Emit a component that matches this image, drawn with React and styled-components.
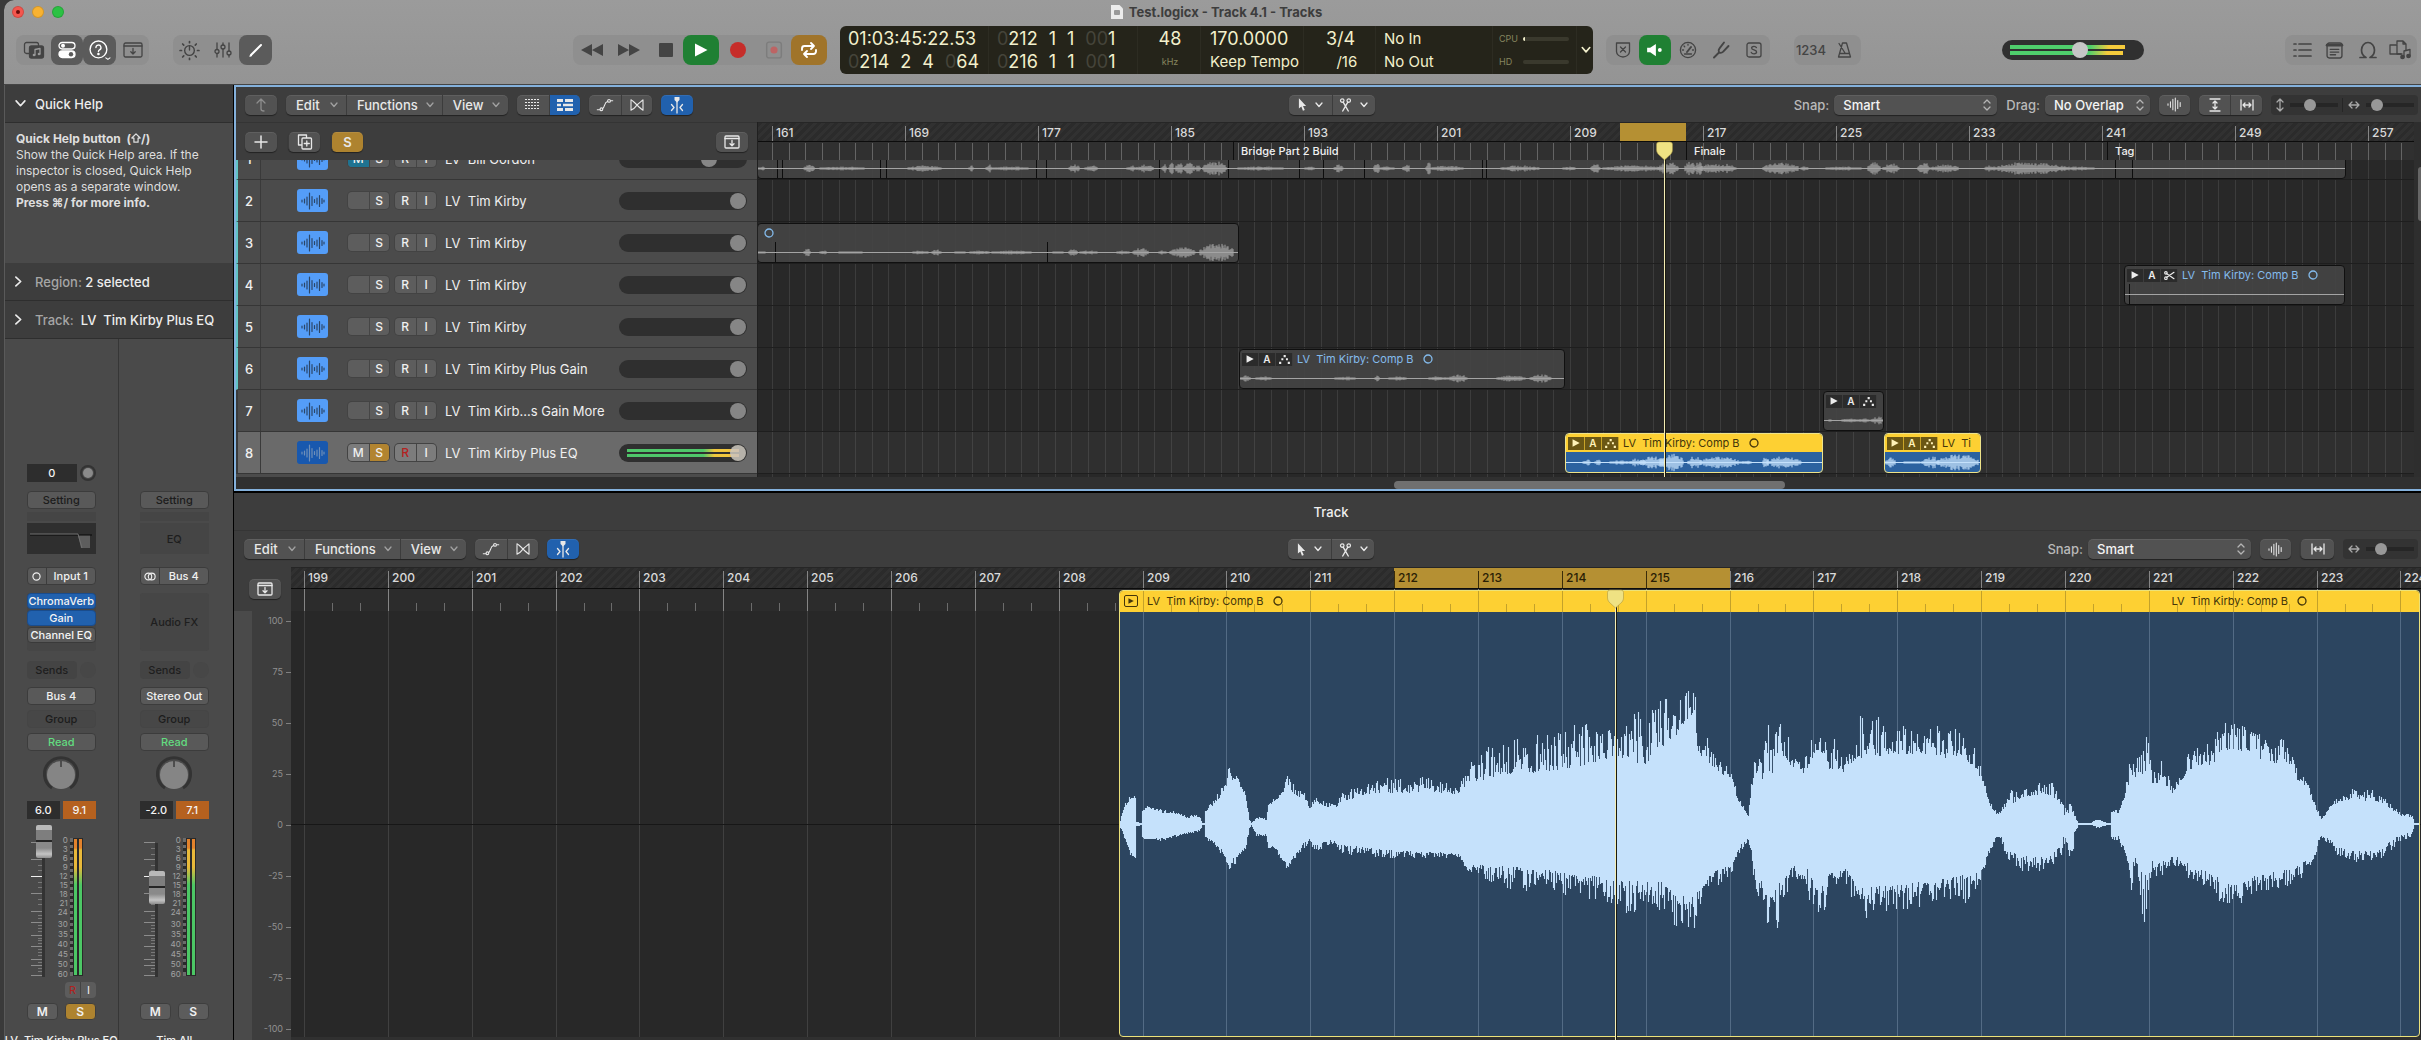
import React from 'react';
import styled, { createGlobalStyle, css } from 'styled-components';

const GlobalStyle = createGlobalStyle`
  * {
    box-sizing: border-box;
  }

  body {
    margin: 0;
    background: #3a3a3a;
    font-family: Inter, "Liberation Sans", sans-serif;
    font-size: 13px;
    color: #f0f0f0;
    overflow: hidden;
  }

  button, select, input {
    font: inherit;
    color: inherit;
    margin: 0;
  }

  button {
    padding: 0;
    border: none;
    background: none;
    cursor: default;
  }
`;

// Timeline scale
const ARRANGE = { origin: 14, firstBar: 161, bar: 133 / 8 };
const EDITOR = { origin: 13, firstBar: 199, bar: 587 / 7 };
const PLAYHEAD = 214.63;
const barX = (scale, bar) => Math.round(scale.origin + (bar - scale.firstBar) * scale.bar);

/* ---------- icons ---------- */

const icons = {
  library: { box: '0 0 22 18', art: <><rect x="1.5" y="1.5" width="14" height="11" rx="2" /><rect x="6.5" y="5" width="14" height="12" rx="2" fill="currentColor" /><path d="M12 14V8.5l5-1V13" stroke="#999" strokeWidth="1.3" /><circle cx="11" cy="14" r="1.3" fill="#999" stroke="none" /><circle cx="16" cy="13" r="1.3" fill="#999" stroke="none" /></> },
  inspector: { box: '0 0 18 18', art: <><rect x="1" y="1.5" width="16" height="6.5" rx="3.2" /><circle cx="5" cy="4.8" r="2" fill="currentColor" stroke="none" /><rect x="1" y="10" width="16" height="6.5" rx="3.2" fill="currentColor" /><circle cx="13" cy="13.2" r="2.2" fill="#5b5b5b" stroke="none" /></> },
  help: { box: '0 0 20 20', art: <><circle cx="9" cy="9" r="8" /><path d="M6.6 7.2a2.4 2.4 0 1 1 3.4 2.2c-.8.4-1 .8-1 1.6" /><circle cx="9" cy="13.3" r=".6" fill="currentColor" /><path d="M16 17l2 1.5 2-1.5" strokeWidth="1" /></> },
  drawer: { box: '0 0 20 16', art: <><rect x="1" y="1" width="18" height="14" rx="1.5" /><path d="M1 4h18M10 6.5v5.5M7.8 9.8l2.2 2.2 2.2-2.2" /></> },
  drawerDown: { box: '0 0 16 14', art: <><rect x="1" y="1" width="14" height="12" rx="1" /><path d="M1 3.5h14M8 5.5v5M6 8.7l2 2 2-2" /></> },
  dial: { box: '0 0 20 18', art: <><circle cx="10" cy="9" r="4.6" /><path d="M10 4.5v4" /><path d="M10 .5v1M10 16.5v1M1 9h1.4M17.6 9H19M3.5 2.8l1 1M16.5 2.8l-1 1M3.5 15.2l1-1M16.5 15.2l-1-1" strokeWidth="1.6" /></> },
  mixer: { box: '0 0 18 16', art: <><path d="M3 1v6.5M3 11.5V15M9 1v2M9 7v8M15 1v8M15 13v2" /><circle cx="3" cy="9.5" r="2" /><circle cx="9" cy="5" r="2" /><circle cx="15" cy="11" r="2" /></> },
  pencil: { box: '0 0 14 14', art: <><path d="M2 12L12 2" strokeWidth="2" /><path d="M1 13.2l1.4-.6" /></> },
  rewind: { box: '0 0 24 14', fill: true, art: <path d="M12 1v12L1 7zM23 1v12L12 7z" /> },
  forward: { box: '0 0 24 14', fill: true, art: <path d="M12 1v12l11-6zM1 1v12l11-6z" /> },
  stop: { box: '0 0 14 14', fill: true, art: <rect x="0" y="0" width="14" height="14" rx="1" /> },
  play: { box: '0 0 14 14', fill: true, art: <path d="M1 .5v13L13.5 7z" /> },
  record: { box: '0 0 16 16', fill: true, art: <circle cx="8" cy="8" r="8" /> },
  capture: { box: '0 0 16 16', art: <><rect x="1.5" y="1" width="13" height="14" rx="2" stroke="#7d7d7d" /><circle cx="8" cy="8" r="3.2" fill="#bd6464" stroke="none" /></> },
  cycle: { box: '0 0 18 16', art: <path d="M2 8V6.5A2.5 2.5 0 0 1 4.500 4H14M11 1l3 3-3 3M16 8v1.5a2.5 2.5 0 0 1-2.500 2.500H4M7 9l-3 3 3 3" strokeWidth="1.9" /> },
  shield: { box: '0 0 16 16', art: <><path d="M1.5 1h13v8.5c0 3-3 5.500-6.500 5.500S1.500 12.500 1.500 9.500z" /><path d="M5.5 5l5 5M10.5 5l-5 5" /></> },
  speaker: { box: '0 0 20 16', fill: true, art: <><path d="M1 5.5h3.5L11 1v14l-6.500-4.500H1z" /><circle cx="15.5" cy="8" r="2.2" /></> },
  gauge: { box: '0 0 18 18', art: <><circle cx="9" cy="9" r="7.6" /><path d="M8 11l4-5" strokeWidth="2" /><path d="M3.5 9h1M13.5 9h1M9 3.2v1M5 5l.7.7M5.5 13h7" /></> },
  fork: { box: '0 0 18 18', art: <path d="M2 16.500l5-5M7 11.500c-1-2-.5-3 .5-4.200L12 1.500M7 11.500c2 .8 3.200.2 4.200-.8L16.500 5" strokeWidth="1.9" /> },
  solo: { box: '0 0 16 16', art: <><rect x="1" y="1" width="14" height="14" rx="2" /><path d="M10.4 5.6C10 4.800 9.100 4.400 8 4.400c-1.400 0-2.400.6-2.400 1.700 0 2.500 5 1.200 5 3.900 0 1.100-1.100 1.800-2.600 1.800-1.300 0-2.300-.5-2.700-1.400" /></> },
  metronome: { box: '0 0 18 18', art: <><path d="M6.5 2h4l4 14h-12zM3.5 12.500h10M9 12L3 2.500" /></> },
  list: { box: '0 0 18 16', art: <path d="M6 2h12M6 8h12M6 14h12M1 2h2M1 8h2M1 14h2" strokeWidth="1.7" /> },
  notes: { box: '0 0 16 16', art: <><rect x="1" y="1" width="14" height="14" rx="2" /><path d="M1 3h14" strokeWidth="2.5" /><path d="M4 7h8M4 9.500h8M4 12h5" strokeWidth="1.2" /></> },
  loop: { box: '0 0 18 18', art: <path d="M1 16.500h6c-2.600-1.400-4.500-4-4.500-7.500a6.500 7.500 0 0 1 13 0c0 3.500-1.900 6.100-4.500 7.500h6" strokeWidth="1.7" /> },
  media: { box: '0 0 24 20', art: <><path d="M8 4V1h6l3 3v6M14 1v3h3M8 14h4" /><path d="M1 5h7v9H1zM8 5v9h5" /><path d="M15 17v-6l6-1.500V16" /><circle cx="13.5" cy="17" r="1.7" fill="currentColor" /><circle cx="19.5" cy="16" r="1.7" fill="currentColor" /></> },
  up: { box: '0 0 14 14', art: <path d="M7 1v10c0 1.500 1 2 3 2M3 5l4-4 4 4" /> },
  grid: { box: '0 0 15 12', fill: true, art: [0, 1, 2, 3].map((r) => [0, 1, 2, 3, 4].map((c) => <rect key={`${r}${c}`} x={c * 3} y={r * 3} width="2" height="1" />)) },
  lanes: { box: '0 0 16 12', fill: true, art: <path d="M0 0h6v3H0zM8 0h8v3H8zM0 4.800h4v2.400H0zM6 4.800h10v2.400H6zM0 9h6v3H0zM8 9h8v3H8z" /> },
  automation: { box: '0 0 18 14', art: <><path d="M0 12.500h3M6.500 11C9 9 8 4 12 3M15.500 2H18" /><circle cx="4.8" cy="12" r="1.6" /><circle cx="13.7" cy="2.2" r="1.6" /></> },
  flex: { box: '0 0 18 14', art: <path d="M2 1v12c4-1 5-4 7-6S15 2 16 1v12c-2-1-5-4-7-6S4 2 2 1z" /> },
  catch: { box: '0 0 16 16', art: <><path d="M5.500 0h5v3L8 5.500 5.500 3z" fill="currentColor" stroke="none" /><path d="M8 4v12M2.500 7.500L5 10.500l-2.500 3M13.500 7.500L11 10.500l2.500 3" /></> },
  plus: { box: '0 0 12 12', art: <path d="M6 0v12M0 6h12" strokeWidth="1.5" /> },
  duplicate: { box: '0 0 16 16', art: <><path d="M4.500 11H1.500V1h8v2.500" /><rect x="5" y="4" width="9.500" height="11" rx="1" /><path d="M9.800 7v5M7.300 9.500h5" /></> },
  pointer: { box: '0 0 10 14', fill: true, art: <path d="M1 0v11.500l2.700-2.300L5.500 14l2-.9-1.900-4.500H9z" /> },
  scissors: { box: '0 0 14 14', art: <><circle cx="3.500" cy="2.800" r="1.900" /><circle cx="10.500" cy="2.800" r="1.900" /><path d="M4.500 4.500L10 14M9.500 4.500L4 14" strokeWidth="1.5" /></> },
  cut: { box: '0 0 12 10', art: <><circle cx="2" cy="2" r="1.4" /><circle cx="2" cy="8" r="1.4" /><path d="M3 3l8 5.500M3 7l8-5.500" /></> },
  wave: { box: '0 0 18 16', art: <path d="M1 7v2M4 4.500v7M7 1.500v13M10 0v16M13 3v10M16 5.500v5" strokeWidth="1.3" /> },
  trackWave: { box: '0 0 24 18', art: <path d="M1 8v2M3.500 7v4M6 5v8M8.500 1v16M11 4.500v9M13.500 7.500v3M16 6v6M18.500 3.500v11M21 6.500v5M23 8v2" strokeWidth="1.2" /> },
  fitHeight: { box: '0 0 12 14', art: <path d="M1 1h10M1 13h10M6 3v8M4 5l2-2 2 2M4 9l2 2 2-2" /> },
  fitWidth: { box: '0 0 14 12', art: <path d="M1 1v10M13 1v10M3 6h8M5 4L3 6l2 2M9 4l2 2-2 2" /> },
  vertical: { box: '0 0 8 14', art: <path d="M4 1v12M1 4l3-3 3 3M1 10l3 3 3-3" /> },
  horizontal: { box: '0 0 12 8', art: <path d="M1 4h10M4 1L1 4l3 3M8 1l3 3-3 3" /> },
  stepper: { box: '0 0 8 12', art: <path d="M1 4l3-3 3 3M1 8l3 3 3-3" /> },
  chevron: { box: '0 0 8 6', art: <path d="M1 1l3 3.500L7 1" /> },
  chevronRight: { box: '0 0 8 12', art: <path d="M1 1l5.500 5L1 11" strokeWidth="1.9" /> },
  chevronDown: { box: '0 0 12 8', art: <path d="M1 1l5 5.500L11 1" strokeWidth="1.9" /> },
  dots: { box: '0 0 12 10', fill: true, art: <path d="M5 0h2.400v2.400H5zM2.500 3.500h2.200v2.200H2.500zM7.600 3.500h2.200v2.200H7.600zM0 7.500h2.400v2.400H0zM9.600 7.500H12v2.400H9.600z" /> },
  mono: { box: '0 0 10 10', art: <circle cx="5" cy="5" r="4" /> },
  stereo: { box: '0 0 14 10', art: <><circle cx="5" cy="5" r="4" /><circle cx="9" cy="5" r="4" /></> },
  doc: { box: '0 0 12 14', art: <><path d="M0 0h8.500L12 3.500V14H0z" fill="#ececec" stroke="none" /><rect x="3" y="5" width="6" height="5" rx="1" fill="#9a9a9a" stroke="none" /></> },
  shift: { box: '0 0 12 12', art: <path d="M6 1l5 5H8.500v5h-5V6H1z" strokeWidth="1.5" /> },
};

const Svg = styled.svg`
  display: block;
  flex: none;
  overflow: visible;
`;

const Icon = ({ name, size }) => {
  const { box, art, fill } = icons[name];
  const [, , w, h] = box.split(' ').map(Number);
  const width = size || w;
  return (
    <Svg
      width={width}
      height={Math.round((width * h) / w)}
      viewBox={box}
      fill={fill ? 'currentColor' : 'none'}
      stroke={fill ? 'none' : 'currentColor'}
      strokeWidth="1.3"
      strokeLinecap="round"
      strokeLinejoin="round"
      aria-hidden="true"
    >
      {art}
    </Svg>
  );
};

/* ---------- wave forms ---------- */

const random = (seed) => {
  let s = seed;
  return () => {
    s = (s * 16807) % 2147483647;
    return s / 2147483647;
  };
};

// x, quiet and loud level above the centre line, quiet and loud level below it
const VOICE = [
  [0, 3, 4, 3, 4], [3, 14, 16, 9, 11], [10, 25, 34, 28, 31], [15, 25, 28, 32, 36], [16, 2, 2, 2, 2], [21, 1, 2, 1, 2],
  [22, 12, 14, 13, 15], [27, 16, 19, 15, 16], [41, 11, 15, 14, 17], [56, 10, 13, 11, 13], [69, 5, 8, 8, 10], [75, 8, 11, 7, 9],
  [80, 5, 7, 5, 7], [82, 1, 1, 1, 1], [84, 1, 1, 1, 1], [85, 12, 14, 12, 14], [92, 18, 24, 16, 21], [99, 26, 34, 22, 28],
  [106, 38, 46, 34, 38], [109, 55, 62, 44, 49], [112, 44, 48, 34, 39], [117, 44, 54, 32, 43], [121, 34, 39, 24, 29], [125, 28, 31, 22, 27],
  [129, 4, 6, 4, 6], [131, 1, 2, 1, 2], [136, 4, 8, 10, 13], [146, 4, 6, 10, 12], [148, 17, 19, 22, 25], [154, 23, 26, 22, 26],
  [162, 28, 33, 32, 38], [167, 40, 48, 42, 48], [173, 30, 40, 32, 36], [184, 24, 31, 18, 24], [189, 14, 18, 14, 18], [195, 22, 28, 20, 29],
  [208, 15, 22, 17, 22], [211, 20, 27, 16, 20], [216, 17, 22, 17, 22], [222, 23, 33, 20, 31], [257, 31, 44, 25, 34], [279, 31, 48, 27, 35],
  [307, 32, 48, 28, 35], [338, 29, 38, 29, 34], [347, 40, 56, 41, 47], [357, 40, 74, 41, 52], [381, 50, 82, 42, 64], [405, 50, 88, 44, 68],
  [433, 53, 90, 46, 70], [459, 57, 103, 52, 74], [474, 62, 106, 52, 77], [496, 68, 94, 58, 82], [510, 64, 114, 56, 93], [526, 56, 114, 58, 86],
  [541, 76, 125, 58, 94], [557, 88, 128, 72, 105], [574, 92, 140, 72, 115], [579, 66, 90, 65, 84], [589, 60, 86, 50, 64], [600, 50, 63, 44, 60],
  [611, 46, 54, 42, 52], [617, 24, 30, 24, 34], [628, 7, 10, 12, 16], [631, 34, 42, 26, 34], [635, 52, 70, 44, 70], [642, 40, 66, 56, 80],
  [648, 50, 100, 76, 114], [653, 42, 80, 66, 84], [658, 66, 105, 60, 110], [666, 66, 98, 52, 78], [672, 52, 72, 42, 62], [683, 50, 63, 43, 56],
  [689, 58, 96, 46, 80], [696, 74, 92, 66, 88], [705, 68, 92, 56, 87], [710, 52, 66, 48, 80], [716, 58, 95, 48, 66], [722, 44, 62, 42, 52],
  [729, 58, 88, 48, 68], [737, 66, 112, 62, 93], [750, 66, 117, 62, 95], [768, 70, 98, 62, 88], [783, 69, 98, 60, 87], [794, 70, 92, 58, 84],
  [811, 70, 101, 58, 82], [824, 66, 94, 54, 76], [837, 68, 96, 52, 80], [848, 62, 84, 50, 84], [857, 52, 74, 46, 64], [863, 41, 46, 38, 50],
  [870, 17, 22, 22, 28], [876, 9, 13, 12, 15], [881, 10, 14, 13, 19], [886, 19, 28, 26, 36], [893, 20, 40, 28, 43], [900, 25, 35, 32, 48],
  [915, 29, 40, 33, 49], [931, 28, 45, 32, 44], [939, 22, 27, 22, 34], [944, 7, 18, 11, 26], [951, 14, 22, 22, 42], [954, 7, 12, 8, 18],
  [958, 1, 1, 1, 1], [971, 1, 1, 1, 1], [977, 4, 6, 3, 5], [987, 1, 1, 1, 1], [990, 1, 1, 1, 1], [991, 12, 15, 13, 16],
  [998, 10, 14, 12, 16], [1004, 24, 30, 24, 30], [1010, 46, 72, 44, 74], [1015, 47, 56, 34, 48], [1023, 50, 106, 50, 104], [1028, 48, 100, 46, 78],
  [1032, 38, 48, 37, 50], [1041, 43, 67, 38, 54], [1052, 31, 37, 32, 42], [1063, 46, 64, 34, 46], [1072, 56, 76, 44, 62], [1091, 58, 84, 48, 63],
  [1102, 74, 105, 58, 84], [1116, 74, 105, 60, 84], [1135, 68, 92, 52, 68], [1146, 62, 88, 48, 66], [1165, 60, 86, 44, 68], [1172, 60, 84, 46, 58],
  [1177, 44, 54, 40, 62], [1187, 36, 44, 36, 44], [1194, 18, 24, 28, 38], [1200, 5, 8, 10, 15], [1202, 4, 6, 11, 14], [1211, 18, 24, 16, 27],
  [1222, 22, 29, 24, 38], [1230, 25, 35, 26, 39], [1248, 23, 36, 26, 37], [1261, 21, 31, 26, 37], [1271, 14, 22, 16, 28], [1280, 8, 13, 11, 18],
  [1292, 7, 9, 8, 13], [1294, 1, 1, 1, 1], [1300, 1, 1, 1, 1],
];

const voicePath = (points, centre) => {
  const next = random(4211);
  let d = '';
  for (let i = 0; i < points.length - 1; i += 1) {
    const [x0, ...a] = points[i];
    const [x1, ...b] = points[i + 1];
    for (let x = x0; x < x1; x += 1) {
      const t = (x - x0) / (x1 - x0);
      const [q, l, dq, dl] = a.map((v, k) => v + (b[k] - v) * t);
      const up = Math.round(q + (l - q) * next() ** 1.6);
      const down = Math.round(dq + (dl - dq) * next() ** 1.5);
      d += `M${x} ${centre - up}V${centre + down}`;
    }
  }
  return d;
};

// blobs: start, end, level
const blobPath = (blobs, width, centre) => {
  const next = random(977);
  let d = `M0 ${centre}H${width}`;
  blobs.forEach(([from, to, level]) => {
    for (let x = from; x < to; x += 1) {
      const t = (x - from) / (to - from);
      const fade = Math.min(1, 0.35 + 2.2 * Math.min(t, 1 - t));
      const h = Math.max(1, level * fade * (0.4 + 0.6 * next()));
      d += `M${x} ${(centre - h).toFixed(1)}V${(centre + h).toFixed(1)}`;
    }
  });
  return d;
};

/* ---------- shared controls ---------- */

const face = css`
  background: #525252;
  border-radius: 5px;
  box-shadow: 0 1px 1px rgba(0, 0, 0, 0.45), inset 0 1px 0 rgba(255, 255, 255, 0.08);
`;

const Cluster = styled.div`
  display: flex;
  height: 20px;
  overflow: hidden;
  ${face}
`;

const Tool = styled.button`
  display: flex;
  align-items: center;
  justify-content: center;
  gap: 8px;
  min-width: ${(p) => p.$w || 32}px;
  height: 20px;
  color: ${(p) => (p.$dim ? '#8d8d8d' : '#e8e8e8')};
  background: ${(p) => p.$bg || 'transparent'};
  font-weight: ${(p) => (p.$bold ? 600 : 400)};

  & + & {
    border-left: 1px solid #3c3c3c;
  }
`;

const Single = styled(Tool)`
  ${face}
  background: ${(p) => p.$bg || '#525252'};
`;

const MenuButton = styled(Tool)`
  justify-content: space-between;
  padding: 0 8px 0 10px;
  font-weight: 500;

  svg {
    color: #a0a0a0;
  }
`;

const SelectLabel = styled.label`
  display: flex;
  align-items: center;
  gap: 5px;
  color: #b9b9b9;
  font-weight: 500;
`;

const SelectBox = styled.span`
  display: flex;
  align-items: center;
  width: ${(p) => p.$w}px;
  padding-right: 6px;
  color: #b5b5b5;
  ${face}

  select {
    flex: 1;
    height: 20px;
    padding: 0 0 0 9px;
    appearance: none;
    border: none;
    background: none;
    color: #f4f4f4;
    font-weight: 500;
  }
`;

const Zoomers = styled.div`
  display: flex;
  align-items: center;
  height: 20px;
  background: #333;
  border-radius: 4px;
`;

const Zoomer = styled.label`
  display: flex;
  align-items: center;
  gap: 6px;
  padding: 0 4px 0 5px;
  color: #a8a8a8;

  & + & {
    border-left: 1px solid #262626;
  }

  input {
    width: 48px;
    height: 14px;
    appearance: none;
    background: linear-gradient(#262626, #262626) center / 100% 4px no-repeat;
  }

  input::-webkit-slider-thumb {
    appearance: none;
    width: 12px;
    height: 12px;
    border-radius: 50%;
    background: #989898;
  }
`;

const MenuCluster = () => (
  <Cluster>
    {[['Edit', 60], ['Functions', 95], ['View', 66]].map(([name, w]) => (
      <MenuButton key={name} $w={w}>{name}<Icon name="chevron" /></MenuButton>
    ))}
  </Cluster>
);

const CurveCluster = () => (
  <Cluster>
    <Tool aria-label="Automation"><Icon name="automation" size={16} /></Tool>
    <Tool $w={31} aria-label="Flex"><Icon name="flex" size={16} /></Tool>
  </Cluster>
);

const PointerCluster = () => (
  <Cluster>
    <Tool $w={43} aria-label="Pointer tool"><Icon name="pointer" size={9} /><Icon name="chevron" /></Tool>
    <Tool $w={43} aria-label="Scissors tool"><Icon name="scissors" size={13} /><Icon name="chevron" /></Tool>
  </Cluster>
);

const Snap = ({ label, value, w }) => (
  <SelectLabel>
    {label}
    <SelectBox $w={w}>
      <select defaultValue={value}><option>{value}</option></select>
      <Icon name="stepper" />
    </SelectBox>
  </SelectLabel>
);

/* ---------- window header ---------- */

const Window = styled.div`
  display: flex;
  flex-direction: column;
  height: 100vh;
  margin-left: 4px;
  border-radius: 10px 0 0 0;
  overflow: hidden;
  background: #000;
`;

const Header = styled.header`
  flex: none;
  background: linear-gradient(#9b9b9b, #949494);
  color: #3d3d3d;
  border-bottom: 1px solid #454545;
`;

const TitleBar = styled.div`
  display: grid;
  grid-template-columns: 1fr auto 1fr;
  align-items: center;
  height: 24px;
  padding-left: 8px;
`;

const Lights = styled.div`
  display: flex;
  gap: 8px;
`;

const Light = styled.button`
  width: 12px;
  height: 12px;
  border-radius: 50%;
  background: ${(p) => p.$c};
  border: 1px solid rgba(0, 0, 0, 0.15);
`;

const CloseDot = styled.span`
  display: block;
  width: 4px;
  height: 4px;
  margin: 0 auto;
  border-radius: 50%;
  background: #6b0d0a;
`;

const Title = styled.h1`
  display: flex;
  align-items: center;
  gap: 6px;
  margin: 0;
  font-size: 13px;
  font-weight: 700;
`;

const Controls = styled.div`
  display: grid;
  grid-template-columns: 1fr auto 1fr;
  gap: 13px;
  padding: 2px 4px 10px 12px;
`;

const Side = styled.div`
  display: flex;
  align-items: center;
  gap: 24px;
`;

const Spring = styled.span`
  flex: 1;
`;

const Pad = styled.div`
  display: flex;
  align-items: center;
  justify-content: space-between;
  height: 30px;
  border-radius: 8px;
  background: #8f8f8f;
`;

const PadButton = styled.button`
  display: flex;
  align-items: center;
  justify-content: center;
  width: ${(p) => p.$w || 33}px;
  height: 30px;
  border-radius: 8px;
  color: ${(p) => p.$c || '#444'};
  background: ${(p) => p.$bg || 'transparent'};
  font-size: 13px;
  font-weight: 500;
`;

const Lcd = styled.div`
  display: flex;
  width: 753px;
  height: 48px;
  border-radius: 6px;
  background: #25241a;
  color: #f3f0cc;
  font-size: 18px;
  line-height: 23px;
`;

const LcdCell = styled.div`
  display: grid;
  grid-template-rows: 23px 23px;
  width: ${(p) => p.$w}px;
  padding: 1px 0 0 ${(p) => p.$pl || 8}px;
  border-right: 1px solid #2d2c22;
  white-space: pre;
  justify-items: ${(p) => (p.$center ? 'center' : 'start')};
`;

const Position = styled.span`
  display: flex;
  gap: 11px;
`;

const Faint = styled.span`
  color: #45443a;
`;

const Words = styled.span`
  font-size: 15px;
`;

const Unit = styled.span`
  font-size: 9px;
  color: #86845f;
`;

const Load = styled.div`
  display: grid;
  grid-template-columns: 16px 46px;
  align-items: center;
  gap: 8px;
  font-size: 9px;
  color: #86845f;
`;

const LoadBar = styled.span`
  height: 4px;
  border-radius: 2px;
  background: linear-gradient(90deg, #f3f0cc ${(p) => p.$v}px, #3a392d ${(p) => p.$v}px);
`;

const LcdMenu = styled.button`
  display: flex;
  align-items: center;
  padding-left: 4px;
`;

const MasterVolume = styled.input`
  width: 142px;
  height: 20px;
  padding: 0 8px;
  appearance: none;
  border-radius: 10px;
  background:
    linear-gradient(90deg, #4fce6c 70%, #f5cb3c 86%) 8px 5px / 115px 4px no-repeat,
    linear-gradient(90deg, #4fce6c 70%, #f5cb3c 86%) 8px 11px / 113px 4px no-repeat,
    #303030;

  &::-webkit-slider-thumb {
    appearance: none;
    width: 16px;
    height: 16px;
    border-radius: 50%;
    background: #c6c6c6;
  }
`;

const Beats = ({ parts }) => (
  <Position>
    {parts.map(([dim, lit], i) => (
      <span key={i}><Faint>{dim}</Faint>{lit}</span>
    ))}
  </Position>
);

const WindowHeader = () => (
  <Header>
    <TitleBar>
      <Lights>
        <Light $c="#f4564e" aria-label="Close"><CloseDot /></Light>
        <Light $c="#f8b231" aria-label="Minimise" />
        <Light $c="#2bc143" aria-label="Zoom" />
      </Lights>
      <Title><Icon name="doc" />Test.logicx - Track 4.1 - Tracks</Title>
    </TitleBar>
    <Controls>
      <Side>
        <Pad>
          <PadButton $w={35} aria-label="Library"><Icon name="library" /></PadButton>
          <PadButton $w={32} $bg="#5b5b5b" $c="#fff" aria-label="Inspector"><Icon name="inspector" /></PadButton>
          <PadButton $bg="#5b5b5b" $c="#fff" aria-label="Quick Help"><Icon name="help" size={21} /></PadButton>
          <PadButton aria-label="Toolbar"><Icon name="drawer" /></PadButton>
        </Pad>
        <Pad>
          <PadButton aria-label="Smart Controls"><Icon name="dial" size={21} /></PadButton>
          <PadButton aria-label="Mixer"><Icon name="mixer" /></PadButton>
          <PadButton $bg="#5b5b5b" $c="#fff" aria-label="Editors"><Icon name="pencil" /></PadButton>
        </Pad>
        <Spring />
        <Pad>
          <PadButton $w={37} aria-label="Rewind"><Icon name="rewind" /></PadButton>
          <PadButton $w={38} aria-label="Forward"><Icon name="forward" /></PadButton>
          <PadButton $w={35} aria-label="Stop"><Icon name="stop" /></PadButton>
          <PadButton $w={36} $bg="#1f8033" $c="#fff" aria-label="Play"><Icon name="play" /></PadButton>
          <PadButton $w={38} $c="#c62d2a" aria-label="Record"><Icon name="record" /></PadButton>
          <PadButton $w={34} aria-label="Capture recording"><Icon name="capture" size={18} /></PadButton>
          <PadButton $w={36} $bg="#a0742a" $c="#fff" aria-label="Cycle"><Icon name="cycle" /></PadButton>
        </Pad>
      </Side>
      <Lcd>
        <LcdCell $w={149}>
          <span>01:03:45:22.53</span>
          <Beats parts={[['0', '214'], ['', '2'], ['', '4'], ['0', '64']]} />
        </LcdCell>
        <LcdCell $w={149}>
          <Beats parts={[['0', '212'], ['', '1'], ['', '1'], ['00', '1']]} />
          <Beats parts={[['0', '216'], ['', '1'], ['', '1'], ['00', '1']]} />
        </LcdCell>
        <LcdCell $w={63} $pl={2} $center>
          <span>48</span>
          <Unit>kHz</Unit>
        </LcdCell>
        <LcdCell $w={103} $pl={9}>
          <span>170.0000</span>
          <Words>Keep Tempo</Words>
        </LcdCell>
        <LcdCell $w={72} $pl={2} $center>
          <span>3/4</span>
          <Words>   /16</Words>
        </LcdCell>
        <LcdCell $w={117}>
          <Words>No In</Words>
          <Words>No Out</Words>
        </LcdCell>
        <LcdCell $w={84} $pl={6}>
          <Load>CPU<LoadBar $v={2} /></Load>
          <Load>HD<LoadBar $v={0} /></Load>
        </LcdCell>
        <LcdMenu aria-label="Display mode"><Icon name="chevron" size={10} /></LcdMenu>
      </Lcd>
      <Side>
        <Pad>
          <PadButton aria-label="Replace"><Icon name="shield" /></PadButton>
          <PadButton $w={32} $bg="#1f8033" $c="#fff" aria-label="Low latency"><Icon name="speaker" size={18} /></PadButton>
          <PadButton aria-label="Varispeed"><Icon name="gauge" /></PadButton>
          <PadButton aria-label="Tuner"><Icon name="fork" /></PadButton>
          <PadButton aria-label="Solo"><Icon name="solo" /></PadButton>
        </Pad>
        <Pad>
          <PadButton $w={34} aria-label="Count in">1234</PadButton>
          <PadButton aria-label="Metronome"><Icon name="metronome" /></PadButton>
        </Pad>
        <Spring />
        <MasterVolume type="range" defaultValue="56" aria-label="Master volume" />
        <Spring />
        <Pad>
          <PadButton aria-label="List editors"><Icon name="list" /></PadButton>
          <PadButton aria-label="Note pads"><Icon name="notes" size={17} /></PadButton>
          <PadButton aria-label="Loop browser"><Icon name="loop" /></PadButton>
          <PadButton aria-label="Browsers"><Icon name="media" /></PadButton>
        </Pad>
      </Side>
    </Controls>
  </Header>
);

/* ---------- inspector ---------- */

const Main = styled.main`
  display: flex;
  flex: 1;
  min-height: 0;
`;

const Inspector = styled.aside`
  display: flex;
  flex-direction: column;
  width: 229px;
  flex: none;
  background: #4a4a4a;
  border-left: 1px solid #5a5a5a;
`;

const Section = styled.button`
  display: flex;
  align-items: center;
  flex: none;
  height: 38px;
  padding-left: 10px;
  background: #3d3d3d;
  border-bottom: 1px solid #2e2e2e;
  color: #ededed;
  font-weight: 500;
  white-space: pre;
`;

const Marker = styled.span`
  display: flex;
  width: 20px;
`;

const Soft = styled.span`
  color: #a6a6a6;
`;

const HelpText = styled.div`
  flex: none;
  height: 140px;
  padding: 8px 11px;
  font-size: 12px;
  line-height: 16px;
  color: #dedede;

  p {
    margin: 0;
  }

  svg {
    display: inline;
  }
`;

const Strips = styled.div`
  display: grid;
  grid-template-columns: 1fr 1fr;
  flex: 1;
  min-height: 0;
  padding-right: 3px;
`;

const Strip = styled.section`
  display: flex;
  flex-direction: column;
  align-items: center;
  padding-top: 125px;
  font-size: 11px;
  overflow: hidden;

  & + & {
    border-left: 1px solid #363636;
  }
`;

const StripRow = styled.div`
  display: flex;
  justify-content: ${(p) => (p.$end ? 'flex-end' : 'space-between')};
  align-items: center;
  flex: none;
  width: 69px;
  height: 18px;
  margin-top: ${(p) => p.$mt || 0}px;
  visibility: ${(p) => (p.$hidden ? 'hidden' : 'visible')};
`;

const Slot = styled.button`
  flex: none;
  width: 69px;
  height: 18px;
  margin-top: ${(p) => p.$mt || 0}px;
  border-radius: 4px;
  border: 1px solid ${(p) => (p.$flat ? '#454545' : '#3c3c3c')};
  background: ${(p) => (p.$flat ? '#474747' : '#595959')};
  color: ${(p) => p.$c || '#f0f0f0'};
  font-weight: 500;
  white-space: nowrap;
`;

const Split = styled.button`
  display: grid;
  grid-template-columns: 18px 1fr;
  align-items: center;
  flex: none;
  width: 69px;
  height: 18px;
  margin-top: 13px;
  border: 1px solid #3c3c3c;
  border-radius: 4px;
  background: #595959;
  font-weight: 500;

  svg {
    margin: 0 auto;
  }

  span {
    border-left: 1px solid #3c3c3c;
    line-height: 16px;
  }
`;

const NameBar = styled.div`
  flex: none;
  width: 69px;
  height: 9px;
  margin-top: 3px;
  background: #454545;
`;

const EqBox = styled.div`
  display: flex;
  align-items: center;
  justify-content: center;
  flex: none;
  width: 69px;
  height: 31px;
  margin-top: 2px;
  background: ${(p) => (p.$on ? '#2f2f2f' : '#454545')};
  color: #1e1e1e;
  font-weight: 500;
`;

const FxStack = styled.div`
  display: flex;
  flex-direction: column;
  justify-content: ${(p) => (p.$empty ? 'center' : 'flex-start')};
  gap: 1px;
  flex: none;
  width: 69px;
  height: 58px;
  margin-top: 8px;
  background: #464646;
  border-radius: 3px;
  text-align: center;
  color: #1e1e1e;
  font-weight: 500;
`;

const Fx = styled.button`
  height: 16px;
  border-radius: 4px;
  border: 1px solid ${(p) => (p.$on ? '#1a4c8c' : '#3a3a3a')};
  background: ${(p) => (p.$on ? '#2161ae' : '#595959')};
  color: #f4f4f4;
  font-weight: 500;
  line-height: 14px;
  white-space: nowrap;
`;

const Send = styled.button`
  width: 50px;
  height: 18px;
  border-radius: 4px;
  background: #444;
  color: #1e1e1e;
  font-weight: 500;
`;

const SendDot = styled.span`
  width: 16px;
  height: 16px;
  border-radius: 50%;
  background: #474747;
`;

const Readout = styled.output`
  width: ${(p) => p.$w || 33}px;
  height: 18px;
  background: ${(p) => (p.$hot ? '#b5611f' : '#2d2d2d')};
  color: #f4f4f4;
  font-weight: 500;
  line-height: 18px;
  text-align: center;
`;

const PanKnob = styled.div`
  flex: none;
  height: 36px;
  margin-top: 6px;
`;

const FaderRow = styled.div`
  display: flex;
  flex: none;
  width: 69px;
  height: 154px;
  margin-top: 6px;
  padding-left: 4px;
`;

const Fader = styled.input`
  width: 16px;
  height: 152px;
  margin-left: 5px;
  writing-mode: vertical-lr;
  direction: rtl;
  appearance: none;
  background: linear-gradient(#333, #333) center bottom / 3px 134px no-repeat;

  &::-webkit-slider-thumb {
    appearance: none;
    width: 16px;
    height: 33px;
    border-radius: 2px;
    background: linear-gradient(#b9b9b9 0 5px, #7e7e7e 5px 15px, #262626 15px 17px, #8a8a8a 17px 23px, #c4c4c4 29px, #8f8f8f);
  }
`;

const Ticks = styled.div`
  width: 0;
`;

const Scale = styled.div`
  display: flex;
  flex-direction: column;
  width: 16px;
  padding-top: 11px;
  font-size: 8px;
  line-height: 9px;
  color: #a2a2a2;
  text-align: right;

  span:nth-child(n + 10) {
    line-height: 10px;
  }

  span:nth-child(10) {
    margin-top: 2px;
  }
`;

const Meter = styled.div`
  display: flex;
  gap: 2px;
  height: 138px;
  margin: 13px 0 0 2px;
  padding: 1px;
  border-left: 3px dotted #6b6b6b;
  background: #2a2a2a;

  span {
    width: 3px;
    background: linear-gradient(#e2822c 0 9px, #e9b93a 11px 28px, #4cc765 46px);
  }
`;

const SquareButton = styled.button`
  width: 31px;
  height: 17px;
  border-radius: 4px;
  border: 1px solid #3e3e3e;
  background: ${(p) => (p.$gold ? '#ae832f' : '#5c5c5c')};
  font-size: 12px;
  font-weight: 600;
`;

const RecordPair = styled.div`
  display: grid;
  grid-template-columns: 1fr 1fr;
  width: 31px;
  height: 16px;
  border-radius: 4px;
  background: #5c5c5c;
  overflow: hidden;

  button + button {
    border-left: 1px solid #434343;
  }

  button:first-child {
    color: #b3221f;
  }
`;

const StripName = styled.div`
  flex: none;
  margin-top: 12px;
  font-size: 11px;
  font-weight: 500;
  line-height: 16px;
  white-space: pre;
`;

const LONG = [17, 34, 51, 68, 86, 97, 110, 121, 134, 140, 150];
const SHORT = [23, 29, 40, 45, 57, 62, 74, 79, 90, 93, 100, 103, 106, 113, 115, 118, 124, 127, 130, 137, 143, 146];
const LEVELS = [0, 3, 6, 9, 12, 15, 18, 21, 24, 30, 35, 40, 45, 50, 60];

const ChannelStrip = ({ strip }) => (
  <Strip>
    <StripRow $hidden={!strip.gain}>
      <Readout $w={50}>{strip.gain}</Readout>
      <Svg width="16" height="16" viewBox="0 0 16 16"><circle cx="8" cy="8" r="7" fill="none" stroke="#333" strokeWidth="2" /><circle cx="8" cy="8" r="5" fill="#8a8a8a" /></Svg>
    </StripRow>
    <Slot $mt={9} $c="#1c1c1c">Setting</Slot>
    <NameBar />
    <EqBox $on={strip.eq}>
      {strip.eq ? (
        <Svg width="62" height="24" viewBox="0 0 62 24">
          <path d="M48 8l3 13h9V8z" fill="#5d5d5d" />
          <path d="M0 8h62" stroke="#090909" />
          <path d="M0 7h48l4 14" stroke="#707070" fill="none" />
        </Svg>
      ) : 'EQ'}
    </EqBox>
    <Split><Icon name={strip.format} size={strip.format === 'mono' ? 9 : 12} /><span>{strip.input}</span></Split>
    <FxStack $empty={!strip.fx.length}>
      {strip.fx.map(([name, on]) => <Fx key={name} $on={on}>{name}</Fx>)}
      {!strip.fx.length && 'Audio FX'}
    </FxStack>
    <StripRow $mt={10}><Send>Sends</Send><SendDot /></StripRow>
    <Slot $mt={8}>{strip.output}</Slot>
    <Slot $mt={5} $flat $c="#1c1c1c">Group</Slot>
    <Slot $mt={5} $c="#63dc80">Read</Slot>
    <PanKnob>
      <Svg width="36" height="36" viewBox="0 0 36 36">
        <path d="M9 31A16.5 16.5 0 1 1 27 31" fill="none" stroke="#333" strokeWidth="3" />
        <circle cx="18" cy="18" r="14" fill="#858585" />
        <path d="M18 4v6" stroke="#161616" />
      </Svg>
    </PanKnob>
    <StripRow $mt={8}>
      <Readout>{strip.level}</Readout>
      <Readout $hot>{strip.peak}</Readout>
    </StripRow>
    <FaderRow>
      <Ticks>
        <Svg width="12" height="154" viewBox="0 0 12 154">
          {LONG.map((y) => <path key={y} d={`M0 ${y}.5h11`} stroke={y === 51 ? '#f0f0f0' : '#8c8c8c'} />)}
          {SHORT.map((y) => <path key={y} d={`M7 ${y}.5h4`} stroke="#787878" />)}
        </Svg>
      </Ticks>
      <Fader type="range" defaultValue={strip.fader} aria-label={`${strip.name} volume`} />
      <Scale>{LEVELS.map((n) => <span key={n}>{n}</span>)}</Scale>
      <Meter><span /><span /></Meter>
    </FaderRow>
    <StripRow $mt={2} $end $hidden={!strip.gain}>
      <RecordPair><button>R</button><button>I</button></RecordPair>
    </StripRow>
    <StripRow $mt={3}>
      <SquareButton>M</SquareButton>
      <SquareButton $gold={strip.solo}>S</SquareButton>
    </StripRow>
    <StripName>{strip.name}</StripName>
  </Strip>
);

const STRIPS = [
  { name: 'LV  Tim Kirby Plus EQ', gain: '0', eq: true, format: 'mono', input: 'Input 1', fx: [['ChromaVerb', true], ['Gain', true], ['Channel EQ', false]], output: 'Bus 4', level: '6.0', peak: '9.1', fader: 100, solo: true },
  { name: 'Tim All', format: 'stereo', input: 'Bus 4', fx: [], output: 'Stereo Out', level: '-2.0', peak: '7.1', fader: 61 },
];

const InspectorPanel = () => (
  <Inspector>
    <Section><Marker><Icon name="chevronDown" size={11} /></Marker>Quick Help</Section>
    <HelpText>
      <p><b>Quick Help button   &nbsp;(<Icon name="shift" size={10} />/)</b></p>
      <p>Show the Quick Help area. If the inspector is closed, Quick Help opens as a separate window.</p>
      <p><b>Press ⌘/ for more info.</b></p>
    </HelpText>
    <Section><Marker><Icon name="chevronRight" size={7} /></Marker><Soft>Region: </Soft>2 selected</Section>
    <Section><Marker><Icon name="chevronRight" size={7} /></Marker><Soft>Track:  </Soft>LV  Tim Kirby Plus EQ</Section>
    <Strips>
      {STRIPS.map((strip) => <ChannelStrip key={strip.name} strip={strip} />)}
    </Strips>
  </Inspector>
);

/* ---------- timeline parts ---------- */

const Work = styled.div`
  display: flex;
  flex-direction: column;
  flex: 1;
  min-width: 0;
  margin-left: 1px;
`;

const Toolbar = styled.div`
  display: grid;
  grid-template-columns: 1fr auto 1fr;
  align-items: center;
  flex: none;
  height: ${(p) => p.$h}px;
  padding: 0 3px 0 ${(p) => p.$pl}px;
  background: #3d3d3d;
`;

const ToolSide = styled.div`
  display: flex;
  align-items: center;
  gap: 9px;
  justify-content: ${(p) => (p.$end ? 'flex-end' : 'flex-start')};
`;

const Ruler = styled.div`
  position: relative;
  flex: none;
  height: ${(p) => p.$h}px;
  border-top: 1px solid #262626;
  border-bottom: 1px solid #0c0c0c;
  background: repeating-linear-gradient(135deg, #2b2b2b 0 3px, #313131 3px 6px);
`;

const BarNumber = styled.span`
  position: absolute;
  top: 3px;
  bottom: 0;
  padding-left: 3px;
  border-left: 1px solid ${(p) => (p.$dark ? '#3a2c0a' : '#858585')};
  color: ${(p) => (p.$dark ? '#2a2005' : '#dadada')};
  font-size: 12px;
  font-weight: 500;
  line-height: 13px;
`;

const Cycle = styled.div`
  position: absolute;
  top: 0;
  bottom: 0;
  background: #b59033;
`;

const Line = styled.i`
  position: absolute;
  top: ${(p) => p.$top || 0}px;
  bottom: 0;
  width: 1px;
  background: ${(p) => p.$c};
`;

const Lines = ({ scale, from, to, step = 1, color, top, skip = 0 }) => {
  const items = [];
  for (let n = 0; from + n * step < to; n += 1) {
    if (skip && n % skip === 0) continue;
    items.push(from + n * step);
  }
  return items.map((bar) => <Line key={bar} $c={color} $top={top} style={{ left: barX(scale, bar) }} />);
};

const Needle = styled.div`
  position: absolute;
  top: ${(p) => p.$top}px;
  bottom: 0;
  width: 2px;
  background: linear-gradient(90deg, #f4edb4 50%, #1a1a10 50%);
  z-index: 3;

  svg {
    position: absolute;
    left: -8px;
    top: 0;
  }
`;

const Playhead = ({ scale, top }) => (
  <Needle $top={top} style={{ left: barX(scale, PLAYHEAD) }}>
    <Svg width="17" height="18" viewBox="0 0 17 18"><path d="M3 0h11q2.5 0 2.5 2.5V8q0 2-1.500 4L8.500 18 2 12Q.5 10 .5 8V2.500Q.5 0 3 0z" fill="#efe283" stroke="#a08f3c" strokeWidth=".5" /></Svg>
  </Needle>
);

/* ---------- tracks area ---------- */

const TracksPanel = styled.section`
  display: flex;
  flex-direction: column;
  flex: none;
  border: 2px solid #84b1dc;
  border-right: none;
  background: #303030;
`;

const TracksBody = styled.div`
  display: grid;
  grid-template-columns: 522px 1fr 7px;
  height: 355px;
`;

const HeadColumn = styled.div`
  display: flex;
  flex-direction: column;
  min-height: 0;
  border-right: 1px solid #202020;
`;

const HeadTools = styled.div`
  display: flex;
  align-items: center;
  gap: 11px;
  flex: none;
  height: 38px;
  padding: 0 9px;
  background: #3d3d3d;
  border-top: 1px solid #343434;
`;

const TrackList = styled.div`
  display: flex;
  flex-direction: column;
  justify-content: flex-end;
  flex: 1;
  min-height: 0;
  padding-bottom: 3px;
  overflow: hidden;
  background: #4b4b4b;
`;

const TrackRow = styled.div`
  display: flex;
  align-items: center;
  flex: none;
  height: 42px;
  border-bottom: 1px solid #363636;
  border-left: 2px solid ${(p) => (p.$teal ? '#5fc4c4' : '#3a3a3a')};
  background: ${(p) => (p.$on ? '#6a6a6a' : '#4b4b4b')};
`;

const TrackNumber = styled.span`
  width: 23px;
  align-self: stretch;
  border-right: 1px solid #3a3a3a;
  font-weight: 500;
  line-height: 42px;
  text-align: center;
`;

const TrackIcon = styled.span`
  display: flex;
  align-items: center;
  justify-content: center;
  width: 31px;
  height: 23px;
  margin: 0 20px 0 36px;
  border-radius: 3px;
  background: ${(p) => (p.$on ? '#1858ae' : '#549df8')};
  color: ${(p) => (p.$on ? '#6f8fb8' : '#2b4668')};
`;

const Pair = styled.div`
  display: grid;
  grid-template-columns: 1fr 1fr;
  width: 41px;
  height: 17px;
  margin-right: 6px;
  border-radius: 4px;
  overflow: hidden;
  background: ${(p) => (p.$on ? '#7c7c7c' : '#5d5d5d')};
  box-shadow: 0 0 0 1px #434343;
`;

const PairButton = styled.button`
  background: ${(p) => p.$bg || 'transparent'};
  color: ${(p) => p.$c || '#f0f0f0'};
  font-size: 12px;
  font-weight: 500;

  & + & {
    border-left: 1px solid #454545;
  }
`;

const TrackName = styled.span`
  flex: 1;
  padding-left: 3px;
  white-space: pre;
`;

const Volume = styled.input`
  width: 128px;
  height: 18px;
  padding: 0 1px;
  margin-right: 10px;
  appearance: none;
  border-radius: 9px;
  background: #2f2f2f;

  ${(p) => p.$meter && css`
    background:
      linear-gradient(90deg, #4fc66a 68%, #f0c63d 78%, #f0c63d 90%, #e99a54) 8px 5px / 112px 3px no-repeat,
      linear-gradient(90deg, #4fc66a 68%, #f0c63d 78%, #f0c63d 90%, #e99a54) 8px 10px / 112px 3px no-repeat,
      #2f2f2f;
  `}

  &::-webkit-slider-thumb {
    appearance: none;
    width: 16px;
    height: 16px;
    border-radius: 50%;
    background: ${(p) => (p.$meter ? 'rgba(205, 200, 190, 0.85)' : '#868686')};
  }
`;

const Timeline = styled.div`
  position: relative;
  display: flex;
  flex-direction: column;
  min-width: 0;
  min-height: 0;
  overflow: hidden;
`;

const MarkerLane = styled.div`
  position: relative;
  flex: none;
  height: 18px;
  background: #303030;
`;

const MarkerName = styled.span`
  position: absolute;
  top: 0;
  bottom: 0;
  padding-left: 7px;
  border-left: 1px solid #0e0e0e;
  font-size: 11px;
  font-weight: 500;
  line-height: 18px;
`;

const Lanes = styled.div`
  position: relative;
  display: flex;
  flex-direction: column;
  justify-content: flex-end;
  flex: 1;
  min-height: 0;
  padding-bottom: 3px;
  overflow: hidden;
  background: #282828;
`;

const Lane = styled.div`
  position: relative;
  flex: none;
  height: 42px;
  border-bottom: 1px solid #1e1e1e;
  background: ${(p) => (p.$on ? 'rgba(255, 255, 255, 0.035)' : 'transparent')};
`;

const Region = styled.div`
  position: absolute;
  top: 1px;
  height: 40px;
  border: 1px solid ${(p) => (p.$on ? '#eee389' : '#101010')};
  border-radius: 4px;
  background: ${(p) => (p.$on ? '#2c62a0' : 'rgba(68, 68, 68, 0.88)')};
  overflow: hidden;

  & > svg {
    position: absolute;
    left: 0;
    top: 0;
  }
`;

const RegionHead = styled.div`
  display: flex;
  align-items: center;
  height: 18px;
  padding-left: 2px;
  background: ${(p) => (p.$on ? '#fdd033' : 'transparent')};
  color: ${(p) => (p.$on ? '#43350a' : '#84bbec')};
  font-size: 11px;
  white-space: pre;
`;

const Badge = styled.span`
  display: flex;
  align-items: center;
  justify-content: center;
  width: 17px;
  height: 13px;
  border-right: 1px solid ${(p) => (p.$on ? '#c9a529' : '#3d3d3d')};
  background: ${(p) => (p.$on ? '#6a5714' : '#2b2b2b')};
  color: ${(p) => (p.$on ? '#fff3b8' : '#ececec')};
  font-size: 10px;
  font-weight: 600;
`;

const RegionTitle = styled.span`
  display: flex;
  align-items: center;
  gap: 9px;
  padding-left: 4px;
`;

const ScrollRow = styled.div`
  height: 12px;
  padding: 4px 0 0 522px;
  background: #303030;
`;

const ScrollTrack = styled.div`
  display: grid;
  grid-template-columns: 65fr 40fr 65fr;
  height: 8px;
`;

const ScrollThumb = styled.span`
  grid-column: 2;
  border-radius: 4px;
  background: #707070;
`;

const SideScroll = styled.div`
  display: flex;
  justify-content: flex-end;
  padding-top: 45px;
  background: #2e2e2e;
`;

const SideThumb = styled.span`
  width: 3px;
  height: 54px;
  border-radius: 3px 0 0 3px;
  background: #666;
`;

const BLOBS = {
  full: [[0, 7, 2], [46, 57, 4], [62, 107, 2], [150, 184, 3], [211, 216, 3], [228, 234, 4], [234, 271, 2], [311, 322, 4], [327, 340, 3], [369, 380, 3], [380, 396, 4], [404, 409, 5], [411, 416, 7], [417, 425, 6], [425, 437, 6], [437, 443, 3], [445, 469, 7], [480, 526, 2], [547, 557, 2], [576, 586, 4], [616, 622, 6], [622, 637, 2], [645, 652, 5], [668, 673, 7], [673, 706, 3], [743, 782, 3], [805, 818, 2], [833, 843, 4], [845, 906, 3], [900, 921, 6], [927, 937, 8], [936, 945, 7], [940, 979, 5], [1005, 1041, 6], [1043, 1051, 2], [1068, 1104, 2], [1110, 1123, 7], [1125, 1142, 5], [1160, 1172, 6], [1172, 1201, 4], [1227, 1234, 3], [1234, 1308, 6], [1300, 1337, 2]],
  third: [[0, 8, 1], [46, 53, 4], [62, 69, 2], [81, 105, 1], [155, 171, 2], [174, 184, 3], [197, 208, 1], [212, 232, 2], [234, 274, 2], [295, 306, 1], [311, 320, 4], [322, 340, 2], [359, 372, 2], [375, 391, 5], [401, 409, 2], [412, 438, 5], [442, 476, 9]],
  gain: [[0, 11, 3], [16, 32, 2], [95, 116, 2], [135, 140, 3], [149, 167, 2], [189, 209, 2], [209, 228, 4], [257, 286, 3], [290, 312, 4]],
  more: [[5, 8, 1], [18, 34, 2], [34, 46, 2], [47, 60, 4]],
  eqA: [[17, 25, 3], [29, 35, 3], [44, 66, 2], [64, 80, 4], [74, 100, 6], [94, 118, 9], [122, 136, 6], [134, 173, 6], [173, 186, 2], [197, 203, 7], [201, 236, 6]],
  eqB: [[0, 11, 5], [19, 36, 1], [37, 55, 6], [52, 94, 8]],
  tag: [],
};

const TRACKS = [
  { id: 1, name: 'LV  Bill Gordon', volume: 74, muted: true, regions: [{ from: 160.1, to: 255.7, wave: 'full', cuts: [19, 24, 122, 128, 278, 288, 401, 470, 541, 565, 606, 724, 728, 1357, 1374] }] },
  { id: 2, name: 'LV  Tim Kirby', regions: [] },
  { id: 3, name: 'LV  Tim Kirby', regions: [{ from: 160.1, to: 189.1, wave: 'third', loop: true, cuts: [17, 289] }] },
  { id: 4, name: 'LV  Tim Kirby', regions: [{ from: 242.3, to: 255.6, wave: 'tag', title: 'LV  Tim Kirby: Comp B', mark: 'cut', cuts: [4] }] },
  { id: 5, name: 'LV  Tim Kirby', regions: [] },
  { id: 6, name: 'LV  Tim Kirby Plus Gain', regions: [{ from: 189.1, to: 208.7, wave: 'gain', title: 'LV  Tim Kirby: Comp B', mark: 'dots' }] },
  { id: 7, name: 'LV  Tim Kirb...s Gain More', regions: [{ from: 224.2, to: 227.9, wave: 'more', title: '', mark: 'dots' }] },
  { id: 8, name: 'LV  Tim Kirby Plus EQ', on: true, regions: [{ from: 208.7, to: 224.2, wave: 'eqA', title: 'LV  Tim Kirby: Comp B', mark: 'dots' }, { from: 227.9, to: 233.7, wave: 'eqB', title: 'LV  Ti', mark: 'dots', clipped: true }] },
];

const TrackHeader = ({ track }) => (
  <TrackRow $on={track.on} $teal={track.id < 7}>
    <TrackNumber>{track.id}</TrackNumber>
    <TrackIcon $on={track.on}><Icon name="trackWave" /></TrackIcon>
    <Pair $on={track.on}>
      <PairButton $bg={track.muted && '#1f7391'} aria-label="Mute">{(track.on || track.muted) && 'M'}</PairButton>
      <PairButton $bg={track.on && '#b28430'}>S</PairButton>
    </Pair>
    <Pair $on={track.on}>
      <PairButton $c={track.on && '#b3221f'}>R</PairButton>
      <PairButton>I</PairButton>
    </Pair>
    <TrackName>{track.name}</TrackName>
    <Volume type="range" defaultValue={track.volume || 100} $meter={track.on} aria-label={`Track ${track.id} volume`} />
  </TrackRow>
);

const RegionView = ({ region, on }) => {
  const left = barX(ARRANGE, region.from);
  const width = barX(ARRANGE, region.to) - left;
  return (
    <Region $on={on} style={{ left, width }}>
      <Svg width={width} height="40" viewBox={`0 0 ${width} 40`}>
        {(region.cuts || []).map((x) => <path key={x} d={`M${x}.5 18V39`} stroke="#0d0d0d" />)}
        <path d={blobPath(BLOBS[region.wave], width, 28.5)} stroke={on ? '#c5e1fb' : '#a4a4a4'} fill="none" />
      </Svg>
      <RegionHead $on={on}>
        {region.mark && (
          <>
            <Badge $on={on}><Icon name="play" size={8} /></Badge>
            <Badge $on={on}>A</Badge>
            <Badge $on={on}><Icon name={region.mark} size={11} /></Badge>
          </>
        )}
        {(region.title || region.loop) && (
          <RegionTitle>{region.title}{!region.clipped && <Icon name="mono" />}</RegionTitle>
        )}
      </RegionHead>
    </Region>
  );
};

const NUMBERS = Array.from({ length: 13 }, (_, i) => 161 + i * 8);
const MARKERS = [['Bridge Part 2 Build', 188.7], ['Finale', 216], ['Tag', 241.3]];

const TracksArea = () => (
  <TracksPanel>
    <Toolbar $h={35} $pl={9}>
      <ToolSide>
        <Single $dim aria-label="Up"><Icon name="up" /></Single>
        <MenuCluster />
        <Cluster>
          <Tool aria-label="Grid"><Icon name="grid" /></Tool>
          <Tool $w={31} $bg="#2161ae" aria-label="Lanes"><Icon name="lanes" /></Tool>
        </Cluster>
        <CurveCluster />
        <Single $bg="#2161ae" aria-label="Catch playhead"><Icon name="catch" /></Single>
      </ToolSide>
      <PointerCluster />
      <ToolSide $end>
        <Snap label="Snap:" value="Smart" w={163} />
        <Snap label="Drag:" value="No Overlap" w={105} />
        <Single $w={31} aria-label="Wave form zoom"><Icon name="wave" size={15} /></Single>
        <Cluster>
          <Tool $w={31} aria-label="Fit height"><Icon name="fitHeight" /></Tool>
          <Tool aria-label="Fit width"><Icon name="fitWidth" /></Tool>
        </Cluster>
        <Zoomers>
          <Zoomer aria-label="Vertical zoom"><Icon name="vertical" /><input type="range" defaultValue="40" /></Zoomer>
          <Zoomer aria-label="Horizontal zoom"><Icon name="horizontal" /><input type="range" defaultValue="14" /></Zoomer>
        </Zoomers>
      </ToolSide>
    </Toolbar>
    <TracksBody>
      <HeadColumn>
        <HeadTools>
          <Single aria-label="Add track"><Icon name="plus" /></Single>
          <Single aria-label="Duplicate track"><Icon name="duplicate" /></Single>
          <Single $bg="#ae832f" $bold>S</Single>
          <Spring />
          <Single aria-label="Track options"><Icon name="drawerDown" /></Single>
        </HeadTools>
        <TrackList>
          {TRACKS.map((track) => <TrackHeader key={track.id} track={track} />)}
        </TrackList>
      </HeadColumn>
      <Timeline>
        <Ruler $h={20}>
          {NUMBERS.map((n) => <BarNumber key={n} style={{ left: barX(ARRANGE, n) }}>{n}</BarNumber>)}
          <Cycle style={{ left: barX(ARRANGE, 212), width: barX(ARRANGE, 216) - barX(ARRANGE, 212) }} />
        </Ruler>
        <MarkerLane>
          <Lines scale={ARRANGE} from={161} to={300} color="#646464" top={1} />
          {MARKERS.map(([name, bar]) => <MarkerName key={name} style={{ left: barX(ARRANGE, bar) }}>{name}</MarkerName>)}
        </MarkerLane>
        <Lanes>
          <Lines scale={ARRANGE} from={161} to={300} color="#3c3c3c" />
          {TRACKS.map((track) => (
            <Lane key={track.id} $on={track.on}>
              {track.regions.map((region) => <RegionView key={region.from} region={region} on={track.on} />)}
            </Lane>
          ))}
        </Lanes>
        <Playhead scale={ARRANGE} top={20} />
      </Timeline>
      <SideScroll><SideThumb /></SideScroll>
    </TracksBody>
    <ScrollRow><ScrollTrack><ScrollThumb /></ScrollTrack></ScrollRow>
  </TracksPanel>
);

/* ---------- audio track editor ---------- */

const EditorPanel = styled.section`
  display: flex;
  flex-direction: column;
  flex: 1;
  min-height: 0;
  margin-top: 2px;
  background: #3d3d3d;
`;

const EditorTitle = styled.h2`
  flex: none;
  height: 38px;
  margin: 0;
  padding-left: 7px;
  border-bottom: 1px solid #353535;
  font-size: 13px;
  font-weight: 500;
  line-height: 38px;
  text-align: center;
`;

const EditorBody = styled.div`
  display: grid;
  grid-template-columns: 57px 1fr;
  flex: 1;
  min-height: 0;
`;

const Gutter = styled.div`
  display: grid;
  grid-template-rows: 44px 1fr;
  min-height: 0;
`;

const GutterTop = styled.div`
  padding: 12px 0 0 15px;
`;

const Percent = styled.div`
  display: flex;
  flex-direction: column;
  justify-content: space-between;
  padding: 5px 0 6px;
  border-left: 18px solid #4a4a4a;
  color: #909090;
  font-size: 9px;
  line-height: 10px;

  span {
    display: flex;
    align-items: center;
    justify-content: flex-end;
    gap: 3px;
  }

  span::after {
    content: "";
    width: 5px;
    height: 1px;
    background: #808080;
  }
`;

const EditorTimeline = styled.div`
  position: relative;
  display: flex;
  flex-direction: column;
  min-width: 0;
  min-height: 0;
  overflow: hidden;
  background: #282828;
`;

const TickLane = styled.div`
  position: relative;
  flex: none;
  height: 22px;
  background: #2c2c2c;
`;

const Canvas = styled.div`
  position: relative;
  flex: 1;
  min-height: 0;
  border-bottom: 3px solid #303030;
`;

const ZeroLine = styled.div`
  position: absolute;
  top: 50%;
  left: 0;
  right: 0;
  height: 1px;
  background: #171717;
`;

const Clip = styled.div`
  position: absolute;
  top: 23px;
  right: 1px;
  bottom: 3px;
  display: flex;
  flex-direction: column;
  border: 1px solid #ece27a;
  border-radius: 4px;
  background: #2c4560;
  overflow: hidden;
`;

const ClipHead = styled.div`
  position: relative;
  display: flex;
  align-items: center;
  justify-content: space-between;
  flex: none;
  height: 21px;
  padding: 0 112px 2px 4px;
  background: #fdd033;
  color: #43350a;
  font-size: 11px;
  white-space: pre;
`;

const ClipLabel = styled.span`
  display: flex;
  align-items: center;
  gap: 9px;
  z-index: 1;
`;

const ClipPlay = styled.span`
  display: flex;
  align-items: center;
  justify-content: center;
  width: 14px;
  height: 12px;
  border: 1px solid #43350a;
  border-radius: 2px;
`;

const ClipBody = styled.div`
  position: relative;
  display: flex;
  align-items: center;
  flex: 1;
  min-height: 0;
`;

const Waveform = styled(Svg)`
  z-index: 1;
`;

const CLIP_START = 208.72;
const CLIP_SCALE = { ...EDITOR, origin: EDITOR.origin - barX(EDITOR, CLIP_START) - 1 };
const EDITOR_NUMBERS = Array.from({ length: 26 }, (_, i) => 199 + i);
const PERCENTS = [100, 75, 50, 25, 0, -25, -50, -75, -100];

const TrackEditor = () => (
  <EditorPanel>
    <EditorTitle>Track</EditorTitle>
    <Toolbar $h={36} $pl={10}>
      <ToolSide>
        <MenuCluster />
        <CurveCluster />
        <Single $bg="#2161ae" aria-label="Catch playhead"><Icon name="catch" /></Single>
      </ToolSide>
      <PointerCluster />
      <ToolSide $end>
        <Snap label="Snap:" value="Smart" w={163} />
        <Single $w={31} aria-label="Wave form zoom"><Icon name="wave" size={15} /></Single>
        <Single $w={34} aria-label="Fit width"><Icon name="fitWidth" /></Single>
        <Zoomers>
          <Zoomer aria-label="Horizontal zoom"><Icon name="horizontal" /><input type="range" defaultValue="25" /></Zoomer>
        </Zoomers>
      </ToolSide>
    </Toolbar>
    <EditorBody>
      <Gutter>
        <GutterTop><Single aria-label="Track options"><Icon name="drawerDown" /></Single></GutterTop>
        <Percent>{PERCENTS.map((n) => <span key={n}>{n}</span>)}</Percent>
      </Gutter>
      <EditorTimeline>
        <Ruler $h={22}>
          <Cycle style={{ left: barX(EDITOR, 212), width: barX(EDITOR, 216) - barX(EDITOR, 212) }} />
          {EDITOR_NUMBERS.map((n) => (
            <BarNumber key={n} $dark={n > 211 && n < 216} style={{ left: barX(EDITOR, n) }}>{n}</BarNumber>
          ))}
        </Ruler>
        <TickLane>
          <Lines scale={EDITOR} from={199} to={240} color="#858585" />
          <Lines scale={EDITOR} from={199} to={240} step={1 / 3} skip={3} color="#6c6c6c" top={14} />
        </TickLane>
        <Canvas>
          <Lines scale={EDITOR} from={199} to={240} color="#404040" />
          <ZeroLine />
        </Canvas>
        <Clip style={{ left: barX(EDITOR, CLIP_START) }}>
          <ClipHead>
            <Lines scale={CLIP_SCALE} from={209} to={240} color="#c3a12a" />
            <Lines scale={CLIP_SCALE} from={209} to={240} step={1 / 3} skip={3} color="#c3a12a" top={13} />
            <ClipLabel><ClipPlay><Icon name="play" size={6} /></ClipPlay>LV  Tim Kirby: Comp B<Icon name="mono" /></ClipLabel>
            <ClipLabel>LV  Tim Kirby: Comp B<Icon name="mono" /></ClipLabel>
          </ClipHead>
          <ClipBody>
            <Lines scale={CLIP_SCALE} from={209} to={240} color="#536b85" />
            <Waveform width="1300" height="300" viewBox="0 0 1300 300">
              <path d={voicePath(VOICE, 150)} transform="translate(.5 0)" stroke="#c5e1fb" strokeWidth="1.1" fill="none" />
            </Waveform>
          </ClipBody>
        </Clip>
        <Playhead scale={EDITOR} top={23} />
      </EditorTimeline>
    </EditorBody>
  </EditorPanel>
);

const App = () => (
  <>
    <GlobalStyle />
    <Window>
      <WindowHeader />
      <Main>
        <InspectorPanel />
        <Work>
          <TracksArea />
          <TrackEditor />
        </Work>
      </Main>
    </Window>
  </>
);

export default App;
